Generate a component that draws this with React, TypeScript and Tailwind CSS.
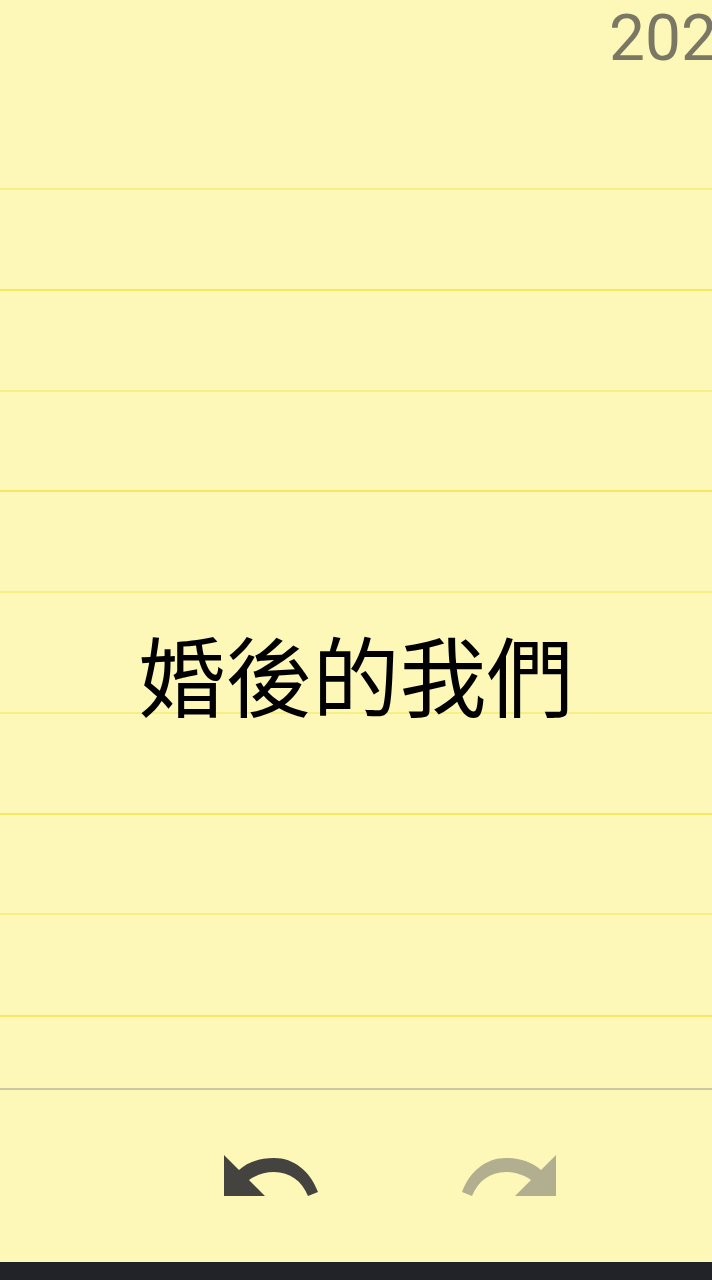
const lineA = "border-b-2 border-[#f8ef84]";
const lineB = "border-b-2 border-[#f5e860]";

function UndoIcon({ className }: { className?: string }) {
  return (
    <svg viewBox="0 0 96 42" className={className} fill="currentColor">
      <path d="M0 0 L15 15 C24 7 36 3 50 3 C70 3 86 16 94 37 L84 41 C78 26 66 17 50 17 C41 17 32 20 25 25 L41 41 L0 41 Z" />
    </svg>
  );
}

export default function App() {
  return (
    <div className="flex h-[1280px] w-[712px] flex-col overflow-hidden bg-[#fdf7b8] font-['Noto_Sans_CJK_TC',sans-serif]">
      {/* Date row, clipped on the right like the phone screen */}
      <div className={`h-[190px] shrink-0 overflow-hidden ${lineA}`}>
        <div className="whitespace-nowrap pl-[609px] pt-[1px] font-['Roboto',sans-serif] text-[64px] leading-[75px] text-[#7a7864]">
          202
        </div>
      </div>
      <div className={`h-[101px] shrink-0 ${lineB}`} />
      <div className={`h-[101px] shrink-0 ${lineA}`} />
      <div className={`h-[100px] shrink-0 ${lineB}`} />
      <div className={`h-[101px] shrink-0 ${lineA}`} />

      {/* Title row is taller than the ruled rows */}
      <div className={`flex h-[121px] shrink-0 items-center justify-center ${lineA}`}>
        <span className="relative top-[21px] text-[87px] leading-none text-black">婚後的我們</span>
      </div>

      <div className={`h-[101px] shrink-0 ${lineB}`} />
      <div className={`h-[100px] shrink-0 ${lineA}`} />
      <div className={`h-[102px] shrink-0 ${lineB}`} />
      <div className="h-[73px] shrink-0 border-b-2 border-[#cbc7a6]" />

      {/* Toolbar */}
      <div className="flex h-[172px] shrink-0 items-start pl-[224px] pt-[65px]">
        <UndoIcon className="h-[42px] w-[96px] text-[#454340]" />
        <UndoIcon className="ml-[140px] h-[42px] w-[96px] -scale-x-100 text-[#b1af90]" />
      </div>

      <div className="flex-1 bg-[#212328]" />
    </div>
  );
}
